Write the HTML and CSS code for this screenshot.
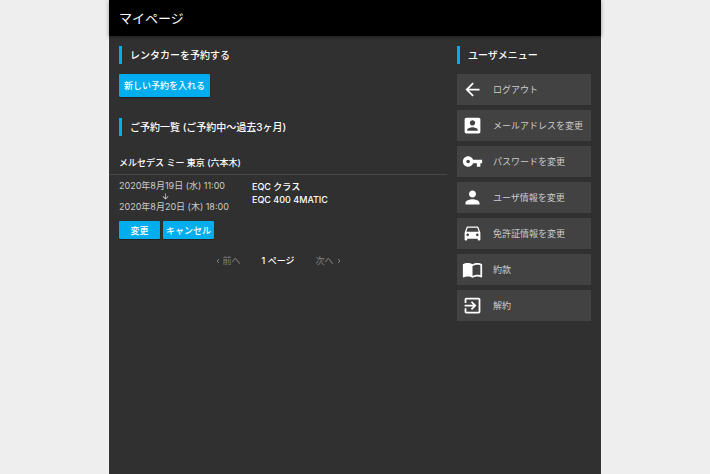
FILE: index.html
```
<!DOCTYPE html>
<html lang="ja">
<head>
  <meta charset="UTF-8">
  <meta name="viewport" content="width=device-width, initial-scale=1">
  <title>マイページ</title>
  <link rel="stylesheet" href="styles.css">
</head>
<body>

  <div class="page">
    <header class="header">
      <h1>マイページ</h1>
    </header>

    <div class="content">
      <main class="main">
        <section class="new-reservation">
          <h2 class="section-title">レンタカーを予約する</h2>
          <button type="button" class="btn btn-large">新しい予約を入れる</button>
        </section>

        <section>
          <h2 class="section-title">ご予約一覧 (ご予約中～過去3ヶ月)</h2>
          <h3 class="store">メルセデス ミー 東京 (六本木)</h3>
          <div class="reservation">
            <div class="period">
              <div>2020年8月19日 (水) 11:00</div>
              <svg class="arrow" viewBox="0 0 24 24"><path d="M20 12l-1.410-1.410L13 16.170V4h-2v12.170l-5.580-5.590L4 12l8 8 8-8z"/></svg>
              <div>2020年8月20日 (木) 18:00</div>
            </div>
            <div class="car">
              <div>EQC クラス</div>
              <div>EQC 400 4MATIC</div>
            </div>
          </div>
          <div class="actions">
            <button type="button" class="btn">変更</button>
            <button type="button" class="btn">キャンセル</button>
          </div>
          <nav class="pager">
            <button type="button" disabled>
              <svg viewBox="0 0 6 8"><path d="M4 2L2 4l2 2"/></svg>
              前へ
            </button>
            <span>1 ページ</span>
            <button type="button" disabled>
              次へ
              <svg viewBox="0 0 6 8"><path d="M2 2l2 2-2 2"/></svg>
            </button>
          </nav>
        </section>
      </main>

      <aside class="side">
        <h2 class="section-title">ユーザメニュー</h2>
        <nav class="menu">
          <a href="#">
            <svg viewBox="0 0 24 24"><path d="M20 11H7.830l5.590-5.590L12 4l-8 8 8 8 1.410-1.410L7.830 13H20v-2z"/></svg>
            ログアウト
          </a>
          <a href="#">
            <svg viewBox="0 0 24 24"><path d="M3 5v14c0 1.100.890 2 2 2h14c1.100 0 2-.900 2-2V5c0-1.100-.900-2-2-2H5c-1.110 0-2 .900-2 2zm12 4c0 1.660-1.340 3-3 3s-3-1.340-3-3 1.340-3 3-3 3 1.340 3 3zm-9 8c0-2 4-3.100 6-3.100s6 1.100 6 3.100v1H6v-1z"/></svg>
            メールアドレスを変更
          </a>
          <a href="#">
            <svg viewBox="0 0 24 24"><path d="M12.650 10C11.830 7.670 9.610 6 7 6c-3.310 0-6 2.690-6 6s2.690 6 6 6c2.610 0 4.830-1.670 5.650-4H17v4h4v-4h2v-4H12.650zM7 14c-1.100 0-2-.900-2-2s.900-2 2-2 2 .900 2 2-.900 2-2 2z"/></svg>
            パスワードを変更
          </a>
          <a href="#">
            <svg viewBox="0 0 24 24"><path d="M12 12c2.210 0 4-1.790 4-4s-1.790-4-4-4-4 1.790-4 4 1.790 4 4 4zm0 2c-2.670 0-8 1.340-8 4v2h16v-2c0-2.660-5.330-4-8-4z"/></svg>
            ユーザ情報を変更
          </a>
          <a href="#">
            <svg viewBox="0 0 24 24"><path d="M18.920 5.010C18.720 4.420 18.160 4 17.500 4h-11c-.660 0-1.210.420-1.420 1.010L3 11v8c0 .550.450 1 1 1h1c.550 0 1-.450 1-1v-1h12v1c0 .550.450 1 1 1h1c.550 0 1-.450 1-1v-8l-2.080-5.990zM6.500 15c-.830 0-1.500-.670-1.500-1.500S5.670 12 6.500 12s1.500.670 1.500 1.500S7.330 15 6.500 15zm11 0c-.830 0-1.500-.670-1.500-1.500s.670-1.500 1.500-1.500 1.500.670 1.500 1.500-.670 1.500-1.500 1.500zM5 10l1.500-4.500h11L19 10H5z"/></svg>
            免許証情報を変更
          </a>
          <a href="#">
            <svg viewBox="0 0 24 24"><path d="M21 5c-1.110-.350-2.330-.500-3.500-.500-1.950 0-4.050.400-5.500 1.500-1.450-1.100-3.550-1.500-5.500-1.500S2.450 4.900 1 6v14.650c0 .250.250.500.500.500.100 0 .150-.050.250-.050C3.100 20.450 5.050 20 6.500 20c1.950 0 4.050.400 5.500 1.500 1.350-.850 3.800-1.500 5.500-1.500 1.650 0 3.350.300 4.750 1.050.100.050.150.050.250.050.250 0 .500-.250.500-.500V6c-.600-.450-1.250-.750-2-1zm0 13.500c-1.100-.350-2.300-.500-3.500-.500-1.700 0-4.150.650-5.500 1.500V8c1.350-.850 3.800-1.500 5.500-1.500 1.200 0 2.400.150 3.500.500v11.500z"/></svg>
            約款
          </a>
          <a href="#">
            <svg viewBox="0 0 24 24"><path d="M10.090 15.590L11.500 17l5-5-5-5-1.410 1.410L12.670 11H3v2h9.670l-2.580 2.590zM19 3H5c-1.110 0-2 .900-2 2v4h2V5h14v14H5v-4H3v4c0 1.100.890 2 2 2h14c1.100 0 2-.900 2-2V5c0-1.100-.900-2-2-2z"/></svg>
            解約
          </a>
        </nav>
      </aside>
    </div>
  </div>

</body>
</html>
```
FILE: styles.css
```
* {
  box-sizing: border-box;
}
body {
  margin: 0;
  background: #eee;
  color: #fff;
  font-family: Inter, "Noto Sans CJK JP", sans-serif;
  font-size: 9px;
  line-height: 13px;
}
h1, h2, h3 {
  margin: 0;
  font-weight: 500;
}
.page {
  max-width: 492px;
  min-height: 100vh;
  margin: 0 auto;
  background: #303030;
  box-shadow: 0 0 2px #fff;
}
.header {
  padding: 7px 10px;
  background: #000;
  box-shadow: 0 1px 4px rgba(0, 0, 0, 0.4);
}
.header h1 {
  font-size: 13px;
  font-weight: 400;
  line-height: 22px;
}
.content {
  display: flex;
  gap: 10px;
  padding: 10px 10px 10px 0;
}
.main {
  flex: 1;
}
.side {
  width: 134px;
}
.section-title {
  padding-left: 8px;
  border-left: 3px solid #00adef;
  font-size: 10px;
  line-height: 18px;
}
.main .section-title {
  margin-left: 10px;
}
.new-reservation {
  margin-bottom: 21px;
}
.btn {
  min-width: 41px;
  height: 18px;
  padding: 0 3px;
  border: none;
  border-radius: 1px;
  background: #00adef;
  box-shadow: 0 1px 1px rgba(0, 0, 0, 0.3);
  color: #fff;
  font: inherit;
  font-weight: 500;
  cursor: pointer;
}
.btn-large {
  height: 23px;
  margin: 10px 0 0 10px;
  padding: 0 5px;
}
.store {
  margin-top: 20px;
  padding: 0 10px 5px;
  border-bottom: 1px solid #484848;
  font-size: 9px;
}
.reservation {
  display: flex;
  gap: 20px;
  padding: 5px 10px;
}
.period {
  display: flex;
  flex-direction: column;
  width: 113px;
  color: #ccc;
  line-height: 12px;
}
.arrow {
  width: 9px;
  height: 9px;
  margin-left: 42px;
  fill: #ccc;
}
.car {
  font-weight: 500;
}
.actions {
  display: flex;
  gap: 3px;
  margin-top: 3px;
  padding: 0 10px;
}
.pager {
  display: flex;
  justify-content: center;
  gap: 21px;
  margin-top: 15px;
  font-weight: 500;
}
.pager button {
  display: flex;
  align-items: center;
  gap: 2px;
  padding: 0;
  border: none;
  background: none;
  color: #808080;
  font: inherit;
  font-weight: 400;
}
.pager svg {
  width: 6px;
  height: 8px;
  fill: none;
  stroke: #808080;
}
.menu {
  display: grid;
  gap: 5px;
  margin-top: 10px;
}
.menu a {
  display: flex;
  align-items: center;
  gap: 10px;
  height: 31px;
  padding: 0 5px;
  background: #424242;
  color: #ccc;
  text-decoration: none;
  white-space: nowrap;
}
.menu svg {
  flex: none;
  width: 21px;
  height: 21px;
  fill: #fff;
}
```
